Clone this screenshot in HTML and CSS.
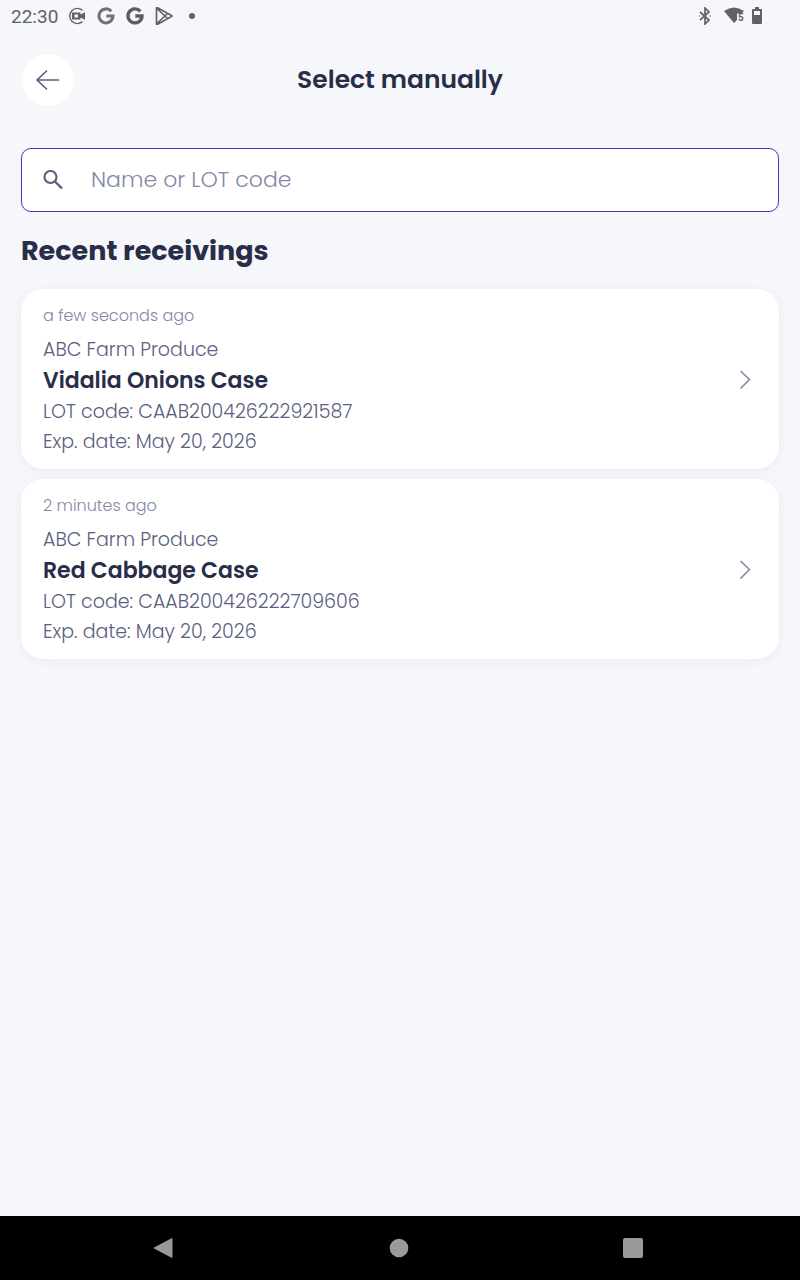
FILE: index.html
```
<!DOCTYPE html>
<html lang="en">
<head>
    <meta charset="UTF-8">
    <meta name="viewport" content="width=device-width, initial-scale=1.0">
    <title>Select manually</title>
    <link rel="stylesheet" href="styles.css">
</head>
<body>
    <div class="status-bar">
        <div class="status-left">
            <span class="clock">22:30</span>
            <svg width="18" height="18" viewBox="0 0 18 18">
                <path d="M14.5 3.4A7.6 7.6 0 1 0 14.5 14.6" fill="none" stroke="#616266" stroke-width="1.4"/>
                <path d="M4 5.5h8.5v2l4.5-2.3v7.6l-4.5-2.3v2H4z" fill="#616266"/>
                <rect x="6.5" y="7.5" width="3.5" height="3" fill="#f5f7fb"/>
            </svg>
            <svg width="18" height="18" viewBox="0 0 18 18">
                <path d="M14.3 4.3A7 7 0 1 0 16 9H9.3" fill="none" stroke="#717276" stroke-width="3"/>
            </svg>
            <svg width="18" height="18" viewBox="0 0 18 18">
                <path d="M14.3 4.3A7 7 0 1 0 16 9H9.3" fill="none" stroke="#5c5d61" stroke-width="3.4"/>
            </svg>
            <svg width="18" height="18" viewBox="0 0 18 18">
                <path d="M1.5 1.2v15.6q0 1 1 .5L16.500 9.600q.8-.6 0-1.200L2.500.7q-1-.5-1 .5zM2 1.500l10.500 10M2 16.500l10.500-10" fill="none" stroke="#616266" stroke-width="1.700" stroke-linejoin="round"/>
            </svg>
            <span class="more-dot"></span>
        </div>
        <div class="status-right">
            <svg width="14" height="18" viewBox="0 0 14 18">
                <path d="M2 5l9 8-4 4V1l4 4-9 8M1.2 9h.8M11.5 9h1.2" fill="none" stroke="#616266" stroke-width="1.7"/>
            </svg>
            <svg class="wifi" width="20" height="18" viewBox="0 0 20 18">
                <path d="M0 4Q10-3 20 4L17.5 6.500H13V13L10 16z" fill="#616266"/>
                <text x="14" y="14" font-size="10" font-weight="700" fill="#616266">5</text>
            </svg>
            <svg width="10" height="18" viewBox="0 0 10 18">
                <path d="M3 0h4v2h2q1 0 1 1v13q0 1-1 1H1q-1 0-1-1V3q0-1 1-1h2z" fill="#616266"/>
                <rect x="2" y="4" width="6" height="4" fill="#f5f7fb"/>
            </svg>
        </div>
    </div>

    <header class="header">
        <button class="back-btn" type="button" aria-label="Back">
            <svg width="24" height="20" viewBox="0 0 24 20">
                <path d="M22.5 10H1M10.5 1L1 10l9.5 9" fill="none" stroke="#5a6080" stroke-width="1.7" stroke-linecap="round" stroke-linejoin="round"/>
            </svg>
        </button>
        <h1>Select manually</h1>
    </header>

    <main class="content">
        <label class="search-box">
            <svg width="20" height="20" viewBox="0 0 20 20">
                <circle cx="7.5" cy="7" r="6" fill="none" stroke="#5a6080" stroke-width="2.2"/>
                <path d="M12 11.5l7 7" stroke="#5a6080" stroke-width="2.4"/>
            </svg>
            <input type="text" placeholder="Name or LOT code" aria-label="Name or LOT code">
        </label>

        <h2>Recent receivings</h2>

        <div class="card-list">
            <a class="card" href="#">
                <div class="card-info">
                    <div class="time">a few seconds ago</div>
                    <div>ABC Farm Produce</div>
                    <div class="product">Vidalia Onions Case</div>
                    <div>LOT code: CAAB200426222921587</div>
                    <div>Exp. date: May 20, 2026</div>
                </div>
                <svg width="12" height="20" viewBox="0 0 12 20">
                    <path d="M1.5 1L10.5 9.500l-9 9" fill="none" stroke="#8388a8" stroke-width="1.6"/>
                </svg>
            </a>
            <a class="card" href="#">
                <div class="card-info">
                    <div class="time">2 minutes ago</div>
                    <div>ABC Farm Produce</div>
                    <div class="product">Red Cabbage Case</div>
                    <div>LOT code: CAAB200426222709606</div>
                    <div>Exp. date: May 20, 2026</div>
                </div>
                <svg width="12" height="20" viewBox="0 0 12 20">
                    <path d="M1.5 1L10.5 9.500l-9 9" fill="none" stroke="#8388a8" stroke-width="1.6"/>
                </svg>
            </a>
        </div>
    </main>

    <nav class="nav-bar">
        <button type="button" aria-label="Back">
            <svg width="22" height="22" viewBox="0 0 22 22">
                <path d="M20 1.5v19L2 11z" fill="#999" stroke="#999" stroke-linejoin="round"/>
            </svg>
        </button>
        <button type="button" aria-label="Home">
            <svg width="22" height="22" viewBox="0 0 22 22">
                <circle cx="12" cy="11" r="9.3" fill="#999"/>
            </svg>
        </button>
        <button type="button" aria-label="Recent apps">
            <svg width="22" height="22" viewBox="0 0 22 22">
                <rect x="1" y="1" width="20" height="20" rx="2" fill="#999"/>
            </svg>
        </button>
    </nav>
</body>
</html>
```

FILE: styles.css
```
* {
    box-sizing: border-box;
}
body {
    margin: 0;
    min-height: 100vh;
    display: flex;
    flex-direction: column;
    background: #f5f7fb;
    color: #5a6080;
    font-family: Poppins, Inter, "Liberation Sans", sans-serif;
}
svg {
    display: block;
    flex-shrink: 0;
}
button {
    padding: 0;
    border: none;
    background: none;
    cursor: pointer;
}
.status-bar {
    display: flex;
    justify-content: space-between;
    align-items: center;
    height: 32px;
    padding: 0 38px 0 11px;
    color: #616266;
    font-family: Roboto, sans-serif;
}
.status-left {
    display: flex;
    align-items: center;
    gap: 11px;
}
.clock {
    margin-right: -1px;
    font-size: 19px;
}
.more-dot {
    width: 6px;
    height: 6px;
    margin-left: 5px;
    border-radius: 50%;
    background: #616266;
}
.status-right {
    display: flex;
    align-items: center;
    gap: 8px;
}
.wifi {
    margin-left: 4px;
}
.header {
    display: grid;
    grid-template-columns: 52px 1fr 52px;
    align-items: center;
    padding: 22px 22px 0;
}
.back-btn {
    display: flex;
    align-items: center;
    justify-content: center;
    width: 52px;
    height: 52px;
    border-radius: 50%;
    background: #fff;
}
h1 {
    margin: 0;
    text-align: center;
    font-size: 25px;
    line-height: 36px;
    font-weight: 600;
    color: #282d48;
}
.content {
    flex: 1;
    padding: 42px 21px 22px;
}
.search-box {
    display: flex;
    align-items: center;
    gap: 28px;
    height: 64px;
    padding: 0 21px;
    border: 1px solid #4a35c4;
    border-radius: 10px;
    background: #fff;
}
.search-box input {
    flex: 1;
    min-width: 0;
    padding: 0;
    border: none;
    outline: none;
    background: none;
    font-family: inherit;
    font-size: 22px;
    line-height: 30px;
    font-weight: 300;
    color: #282d48;
}
.search-box input::placeholder {
    color: #8388a8;
    opacity: 1;
}
h2 {
    margin: 18px 0;
    font-size: 27px;
    line-height: 41px;
    font-weight: 700;
    color: #282d48;
}
.card-list {
    display: flex;
    flex-direction: column;
    gap: 10px;
}
.card {
    display: flex;
    align-items: center;
    justify-content: space-between;
    padding: 13px 28px 12px 22px;
    border-radius: 22px;
    background: #fff;
    box-shadow: 0 2px 10px rgba(90, 96, 128, 0.08);
    color: #5a6080;
    text-decoration: none;
    font-size: 19px;
    line-height: 30px;
    font-weight: 300;
}
.time {
    margin-bottom: 5px;
    font-size: 16px;
    line-height: 28px;
    color: #8388a8;
}
.product {
    font-size: 22px;
    line-height: 32px;
    font-weight: 600;
    color: #282d48;
}
.nav-bar {
    display: flex;
    justify-content: space-around;
    align-items: center;
    height: 64px;
    padding: 0 50px 0 46px;
    background: #000;
}
```
